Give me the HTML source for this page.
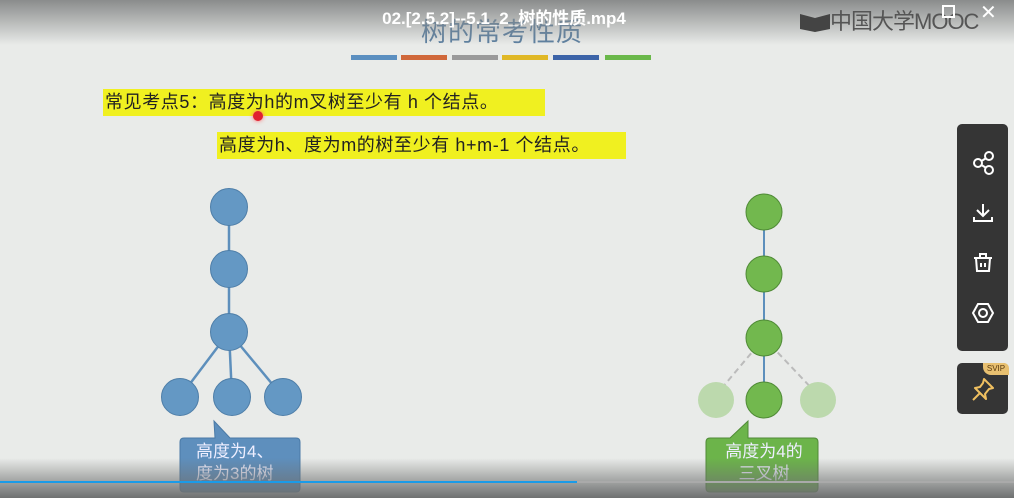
<!DOCTYPE html>
<html><head><meta charset="utf-8"><style>
html,body{margin:0;padding:0}
body{width:1014px;height:498px;overflow:hidden;position:relative;background:#e9ebe9;font-family:"Liberation Sans","Noto Sans CJK SC",sans-serif}
.top{position:absolute;left:0;top:0;width:1014px;height:45px;background:linear-gradient(#8a8c8c,rgba(233,235,233,0))}
.bot{position:absolute;left:0;bottom:0;width:1014px;height:40px;background:linear-gradient(rgba(233,235,233,0),#6e7070)}
.hl{position:absolute;background:#f0f020;font-size:18px;color:#222;line-height:27px;height:27px;white-space:nowrap;padding-left:2px;letter-spacing:0.6px}
.panel{position:absolute;background:#353535;border-radius:5px}
</style></head><body>
<div style="position:absolute;left:421px;top:12px;font-size:26px;color:#5b7fa0;letter-spacing:1px">树的常考性质</div>
<div class="top"></div>
<div style="position:absolute;top:4px;width:1014px;text-align:center;left:-3px;font-size:17px;font-weight:bold;color:#fff">02.[2.5.2]--5.1_2_树的性质.mp4</div>
<div style="position:absolute;left:800px;top:4px;font-size:22px;color:#555;letter-spacing:-1px"><span style="display:inline-block;width:30px;height:20px;background:#444;vertical-align:-3px;clip-path:polygon(0 10%,50% 30%,100% 10%,100% 85%,50% 100%,0 85%)"></span>中国大学MOOC</div>
<div style="position:absolute;left:942px;top:5px;width:9px;height:9px;border:2px solid #fff"></div>
<div style="position:absolute;left:980px;top:0px;color:#fff;font-size:20px">✕</div>
<div style="position:absolute;top:55px;left:351px;width:46px;height:5px;background:#5b8fc0"></div>
<div style="position:absolute;top:55px;left:401px;width:46px;height:5px;background:#d0683a"></div>
<div style="position:absolute;top:55px;left:452px;width:46px;height:5px;background:#9a9a9a"></div>
<div style="position:absolute;top:55px;left:502px;width:46px;height:5px;background:#e0b826"></div>
<div style="position:absolute;top:55px;left:553px;width:46px;height:5px;background:#3c64a8"></div>
<div style="position:absolute;top:55px;left:605px;width:46px;height:5px;background:#6ab84a"></div>
<div class="hl" style="left:103px;top:89px;width:440px">常见考点5：高度为h的m叉树至少有 h 个结点。</div>
<div class="hl" style="left:217px;top:132px;width:407px">高度为h、度为m的树至少有 h+m-1 个结点。</div>
<div style="position:absolute;left:253px;top:111px;width:10px;height:10px;border-radius:50%;background:#e02030;box-shadow:0 0 4px #f66"></div>
<svg style="position:absolute;left:0;top:0" width="1014" height="498">
<g stroke="#5d8fbc" stroke-width="2.5"><line x1="229" y1="207" x2="229" y2="332"/><line x1="229" y1="332" x2="180" y2="397"/><line x1="229" y1="332" x2="232" y2="397"/><line x1="229" y1="332" x2="283" y2="397"/></g>
<g fill="#6498c4" stroke="#4e7ea8" stroke-width="1"><circle cx="229" cy="207" r="18.5"/><circle cx="229" cy="269" r="18.5"/><circle cx="229" cy="332" r="18.5"/><circle cx="180" cy="397" r="18.5"/><circle cx="232" cy="397" r="18.5"/><circle cx="283" cy="397" r="18.5"/></g>
<g stroke="#bbb" stroke-width="2" stroke-dasharray="6,4"><line x1="764" y1="338" x2="716" y2="395"/><line x1="764" y1="338" x2="818" y2="395"/></g>
<line x1="764" y1="212" x2="764" y2="400" stroke="#5d8fbc" stroke-width="2"/>
<g fill="#72b84e" stroke="#4f8a36"><circle cx="764" cy="212" r="18"/><circle cx="764" cy="274" r="18"/><circle cx="764" cy="338" r="18"/><circle cx="764" cy="400" r="18"/></g>
<g fill="#bcd9ad"><circle cx="716" cy="400" r="18"/><circle cx="818" cy="400" r="18"/></g>
<path d="M184 438 H215 L214 421 L230 438 H296 Q300 438 300 442 V488 Q300 492 296 492 H184 Q180 492 180 488 V442 Q180 438 184 438Z" fill="#5e8fbd" stroke="#4a7aa6"/>
<path d="M710 438 H730 L748 421 L748 438 H814 Q818 438 818 442 V488 Q818 492 814 492 H710 Q706 492 706 488 V442 Q706 438 710 438Z" fill="#6cb44a" stroke="#4f8a36"/>
</svg>
<div style="position:absolute;left:196px;top:441px;font-size:17px;color:#eef;line-height:22px">高度为4、<br>度为3的树</div>
<div style="position:absolute;left:717px;top:441px;font-size:17px;color:#eef;line-height:22px;text-align:center;width:94px">高度为4的<br>三叉树</div>
<div class="bot"></div>
<div style="position:absolute;left:0;top:481px;width:1014px;height:2px;background:#aaa"></div>
<div style="position:absolute;left:0;top:481px;width:577px;height:2px;background:#1a9be8"></div>
<div class="panel" style="left:957px;top:124px;width:51px;height:227px"></div>
<svg style="position:absolute;left:957px;top:124px" width="51" height="227" fill="none" stroke="#fff" stroke-width="2">
<circle cx="32" cy="32" r="4"/><circle cx="21" cy="39" r="4"/><circle cx="32" cy="46" r="4"/><line x1="24.5" y1="37" x2="28.5" y2="34.5"/><line x1="24.5" y1="41" x2="28.5" y2="43.5"/>
<path d="M26 80 V92 M20 86 L26 92 L32 86 M17 93 V97 H35 V93"/>
<path d="M17 134 H35 M23 134 V130 H29 V134 M19 134 L20 147 H32 L33 134 M24 139 V143 M28 139 V143"/>
<path d="M16 189 L21 180 H31 L36 189 L31 198 H21 Z"/><circle cx="26" cy="189" r="4"/>
</svg>
<div class="panel" style="left:957px;top:363px;width:51px;height:51px"></div>
<div style="position:absolute;left:983px;top:363px;width:26px;height:12px;background:#e8c070;border-radius:0 5px 0 8px;font-size:8px;color:#5a3a10;text-align:center;line-height:12px">SVIP</div>
<svg style="position:absolute;left:957px;top:363px" width="51" height="51" fill="none" stroke="#f0c060" stroke-width="2" stroke-linejoin="round"><path d="M27 16 L36 25 L32 26 L28 31 L29 36 L18 25 L23 24 L26 20 Z M23 30 L16 37"/></svg>
</body></html>
